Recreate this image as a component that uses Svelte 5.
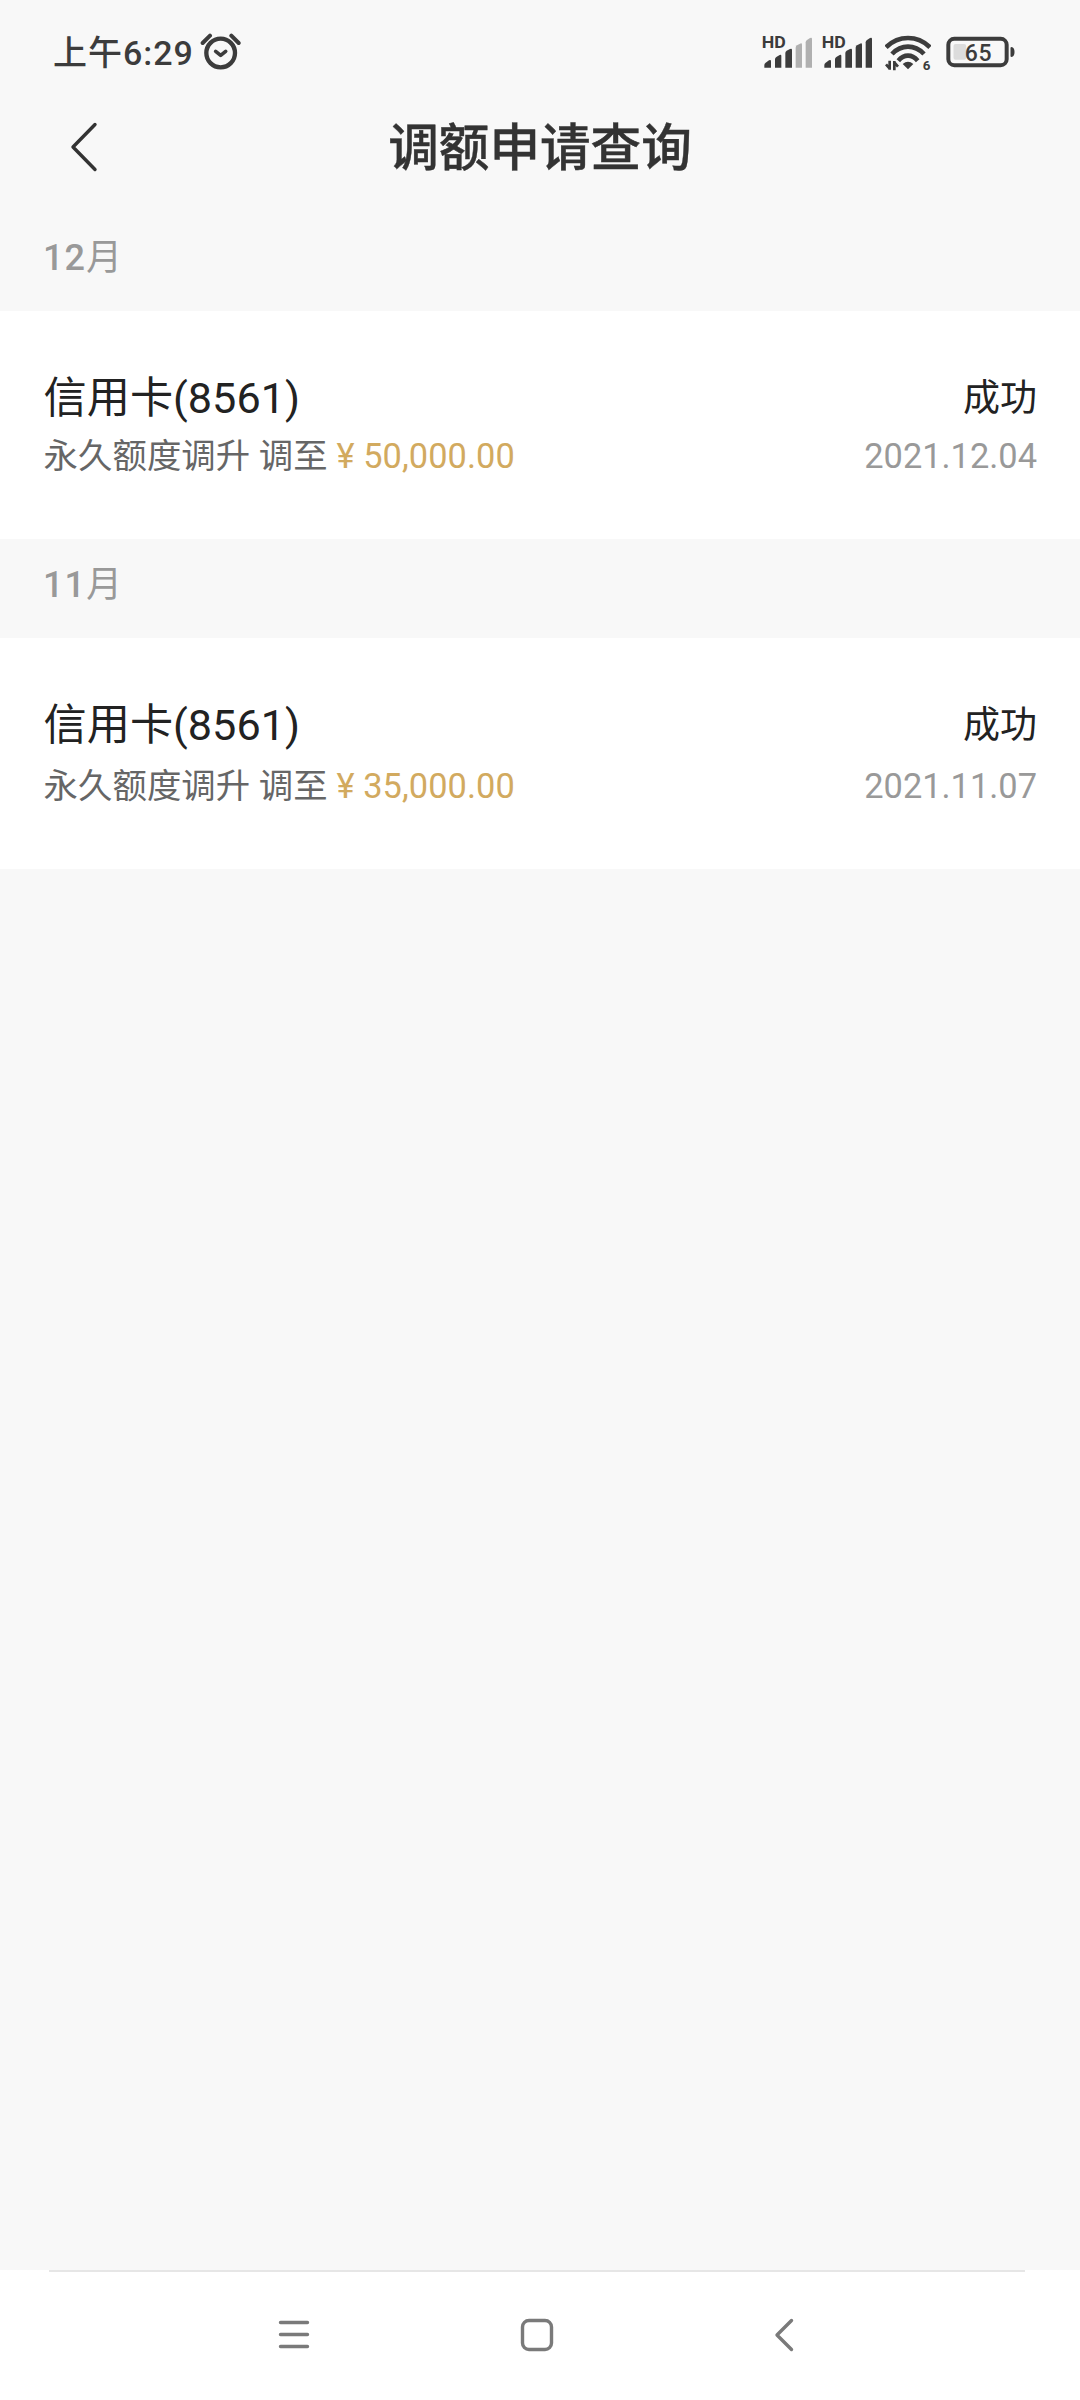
<script>
  const groups = [
    {
      month: 12,
      records: [
        { card: "信用卡(8561)", type: "永久额度调升", amount: "50,000.00", status: "成功", date: "2021.12.04" },
      ],
    },
    {
      month: 11,
      records: [
        { card: "信用卡(8561)", type: "永久额度调升", amount: "35,000.00", status: "成功", date: "2021.11.07" },
      ],
    },
  ];

  // Active bars for each SIM
  const signals = [3, 5];

  const bars = [
    "M7 98V90Q7 86 11 83L21 76Q27 73 27 79V98Z",
    "M39 98V73Q39 69 43 66L53 60Q58 57 58 63V98Z",
    "M70 98V54Q70 50 74 47L84 42Q90 39 90 45V98Z",
    "M101 98V38Q101 34 105 31L114 26Q120 23 120 29V98Z",
    "M131 98V22Q131 18 135 15L144 9Q150 6 150 12V98Z",
  ];
</script>

<div class="screen">
  <div class="status-bar">
    <div class="clock">上午6:29</div>
    <svg class="alarm" viewBox="510 0 123 210" fill="none" stroke="#3c3c3c" stroke-linecap="round">
      <circle cx="572" cy="99" r="43" stroke-width="13" />
      <path d="M518 69L540 47M604 47L626 69" stroke-width="12" />
      <path d="M557 94L572 106L587 94" stroke-width="11" stroke-linejoin="round" />
    </svg>

    <div class="indicators">
      {#each signals as level}
        <svg class="signal" viewBox="0 -45 150 210">
          <text x="-1" y="39" textLength="72" lengthAdjust="spacingAndGlyphs">HD</text>
          {#each bars as d, i}
            <path {d} fill={i < level ? "#3c3c3c" : "#b0b0b0"} />
          {/each}
        </svg>
      {/each}

      <svg class="wifi" viewBox="435 0 138 210" fill="none" stroke="#3c3c3c" stroke-width="14">
        <path d="M438 82Q466 54 504 54Q542 54 570 82" />
        <path d="M456 102Q477 80 504 80Q531 80 552 102" />
        <path d="M475 122Q488 107 504 107Q520 107 533 122" />
        <path d="M488 132Q504 118 520 132L504 148Z" fill="#3c3c3c" stroke="none" />
        <path d="M449 122V149M449 146L438 133M463 151V123M463 127L474 140" stroke-width="8" />
        <text x="548" y="150">6</text>
      </svg>

      <svg class="battery" viewBox="617 0 206 210">
        <rect x="639" y="72" width="38" height="47" rx="6" fill="#dcdcdc" />
        <rect x="623.5" y="56.5" width="175" height="79" rx="18" fill="none" stroke="#3c3c3c" stroke-width="12" />
        <path d="M810 84Q810 81 813 81Q822 83 822 96Q822 109 813 111Q810 111 810 108Z" fill="#3c3c3c" />
        <text x="673" y="122" textLength="80">65</text>
      </svg>
    </div>
  </div>

  <header class="header">
    <svg class="back" viewBox="0 0 30 52" fill="none">
      <path d="M27 3.5L5 26L27 48.5" stroke="#333" stroke-width="3.4" stroke-linecap="round" stroke-linejoin="round" />
    </svg>
    <h1>调额申请查询</h1>
  </header>

  <main>
    {#each groups as group}
      <section>
        <h2><b>{group.month}</b>月</h2>
        {#each group.records as record}
          <div class="record">
            <div class="row">
              <span class="card-name">{record.card}</span>
              <span class="state">{record.status}</span>
            </div>
            <div class="row detail">
              <span class="desc">{record.type} 调至 <span class="amount">¥ {record.amount}</span></span>
              <span class="date">{record.date}</span>
            </div>
          </div>
        {/each}
      </section>
    {/each}
  </main>

  <nav class="nav-bar">
    <svg viewBox="0 0 40 40">
      <path d="M6.5 7.5H33.5M6.5 19.5H33.5M6.5 31.5H33.5" />
    </svg>
    <svg viewBox="0 0 40 40">
      <rect x="4.5" y="5.5" width="29" height="29" rx="6.5" />
    </svg>
    <svg viewBox="0 0 40 40">
      <path d="M29.5 5.5L15 20L29.5 34.5" />
    </svg>
  </nav>
</div>

<style>
  :global(body) {
    margin: 0;
    background: #f8f8f8;
  }

  .screen {
    display: flex;
    flex-direction: column;
    width: 1080px;
    height: 2400px;
    background: #f8f8f8;
    font-family: Roboto, "Noto Sans CJK SC", sans-serif;
    color: #222;
  }

  svg {
    display: block;
    flex-shrink: 0;
  }

  /* Status bar */
  .status-bar {
    display: flex;
    height: 70px;
    padding: 20px 65px 0 53px;
  }

  .clock {
    font-size: 34px;
    font-weight: 500;
    line-height: 67px;
    letter-spacing: 1px;
    color: #3c3c3c;
    white-space: nowrap;
  }

  .alarm {
    width: 41px;
    height: 70px;
    margin-left: 6px;
  }

  .indicators {
    display: flex;
    margin-left: auto;
  }

  .signal {
    width: 50px;
    height: 70px;
    margin-right: 10px;
    overflow: visible;
  }

  .signal text {
    font-size: 49px;
    font-weight: 700;
    fill: #3c3c3c;
  }

  .wifi {
    width: 46px;
    height: 70px;
    margin: 0 15px 0 3px;
  }

  .wifi text {
    font-size: 40px;
    font-weight: 700;
    fill: #3c3c3c;
    stroke: none;
  }

  .battery {
    width: 69px;
    height: 70px;
  }

  .battery text {
    font-size: 69px;
    font-weight: 500;
    fill: #3c3c3c;
  }

  /* Page header */
  .header {
    display: grid;
    grid-template-columns: 1fr auto 1fr;
    align-items: center;
    height: 114px;
    padding: 0 68px 8px;
  }

  .back {
    width: 30px;
    height: 52px;
  }

  h1 {
    margin: 0;
    padding-top: 4px;
    font-size: 50.6px;
    font-weight: 500;
    line-height: 70px;
    color: #333;
    -webkit-text-stroke: 0.4px #333;
  }

  /* Month groups */
  h2 {
    height: 99px;
    margin: 0;
    padding: 0 43px;
    font-size: 36px;
    font-weight: 400;
    line-height: 93px;
    color: #999;
  }

  h2 b {
    font-weight: 500;
    letter-spacing: 1px;
  }

  .record {
    height: 170px;
    padding: 58px 43px 0 43.5px;
    background: #fff;
  }

  section:last-child .record {
    height: 173px;
  }

  .row {
    display: flex;
    justify-content: space-between;
    line-height: 60px;
    white-space: nowrap;
  }

  .card-name {
    font-size: 43.2px;
  }

  .state {
    font-size: 37px;
  }

  .detail {
    margin-top: 3px;
    font-size: 34.4px;
    line-height: 48px;
  }

  section:last-child .detail {
    margin-top: 6px;
  }

  .desc {
    color: #666;
    letter-spacing: 0.07px;
  }

  .amount {
    color: #d2aa5f;
  }

  .date {
    color: #999;
  }

  /* System navigation */
  .nav-bar {
    display: flex;
    align-items: center;
    justify-content: center;
    gap: 204px;
    height: 130px;
    margin-top: auto;
    padding-right: 4px;
    background: linear-gradient(#e6e6e6, #e6e6e6) 49px 0 / 976px 2px no-repeat #fff;
  }

  .nav-bar svg {
    width: 40px;
    height: 40px;
    fill: none;
    stroke: #7a7a7a;
    stroke-width: 3.4;
    stroke-linecap: round;
    stroke-linejoin: round;
  }
</style>
